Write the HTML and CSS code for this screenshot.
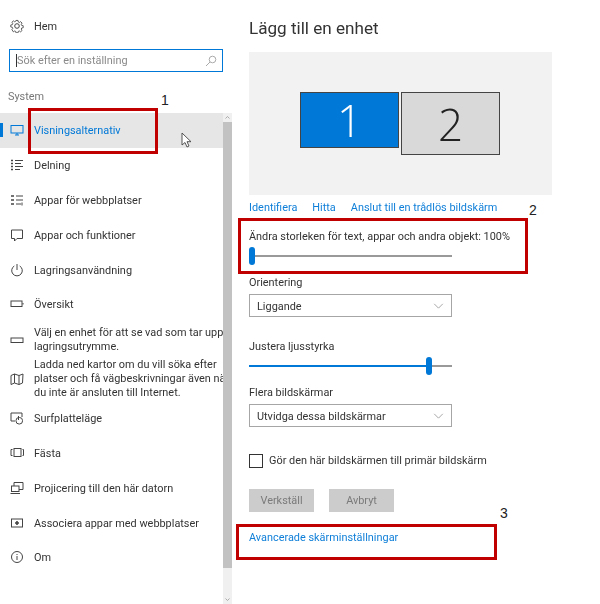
FILE: index.html
```html
<!DOCTYPE html>
<html lang="sv">
<head>
<meta charset="utf-8">
<title>Inställningar</title>
<link rel="stylesheet" href="styles.css">
</head>
<body>
<div class="app">
  <aside class="side">
    <div class="home">
      <svg class="icon" viewBox="0 0 14 14"><path d="M5.800 1h2.400l.3 1.800 1.300.6 1.500-1 1.700 1.700-1 1.500.5 1.300 1.800.3v2.400l-1.800.3-.5 1.300 1 1.500-1.700 1.700-1.500-1-1.300.5-.3 1.700H5.800l-.3-1.700-1.300-.5-1.500 1L1 11.800l1-1.500-.5-1.300L-.3 8.700V6.300l1.800-.3.5-1.300-1-1.500L2.700 1.500l1.500 1 1.300-.6z" transform="translate(1.050 .6) scale(.85)"/><circle cx="7" cy="7" r="2.300"/></svg>
      <span class="text">Hem</span>
    </div>
    <div class="search">
      <span class="caret"></span>
      <span class="placeholder">Sök efter en inställning</span>
      <svg class="search-icon" viewBox="0 0 12 12"><circle cx="7.500" cy="4.500" r="3.300"/><path d="M5 7 1 11"/></svg>
    </div>
    <div class="section">System</div>
    <div class="nav-wrap">
      <nav class="nav">
        <div class="item active">
          <span class="marker"></span>
          <svg class="icon" viewBox="0 0 14 14"><rect x="1" y="2.500" width="12" height="7.500"/><path d="M5 12h4M7 10v2"/></svg>
          <span class="text">Visningsalternativ</span>
        </div>
        <div class="item">
          <svg class="icon" viewBox="0 0 14 14"><path class="heavy" d="M1 2.500h2M1 5.500h2M1 8.500h2M1 11.500h2"/><path d="M5 2.500h8M5 5.500h6M5 8.500h8M5 11.500h5"/></svg>
          <span class="text">Delning</span>
        </div>
        <div class="item">
          <svg class="icon" viewBox="0 0 14 14"><path class="heavy" d="M1 3h3M1 7h3M1 11h3"/><path d="M6 3h7M6 7h7M6 11h5M12 9.500v3"/></svg>
          <span class="text">Appar för webbplatser</span>
        </div>
        <div class="item">
          <svg class="icon" viewBox="0 0 14 14"><path d="M1.500 2h11v8.500H7L4.500 13v-2.500h-3z"/></svg>
          <span class="text">Appar och funktioner</span>
        </div>
        <div class="item">
          <svg class="icon" viewBox="0 0 14 14"><path d="M4.300 3a5.300 5.300 0 1 0 5.400 0M7 1v6"/></svg>
          <span class="text">Lagringsanvändning</span>
        </div>
        <div class="item">
          <svg class="icon" viewBox="0 0 14 14"><rect x="1" y="4" width="11" height="5.500"/><path d="M13 6v1.500"/></svg>
          <span class="text">Översikt</span>
        </div>
        <div class="item tall-two">
          <svg class="icon" viewBox="0 0 14 14"><rect x="1" y="5" width="12" height="4.500"/></svg>
          <span class="lines text"><span>Välj en enhet för att se vad som tar upp</span><span>lagringsutrymme.</span></span>
        </div>
        <div class="item tall-three">
          <svg class="icon" viewBox="0 0 14 14"><path d="M1 3.500 4.500 2 9 3.500 13 2l-.5 9-3.500 1.500L4.500 11 1 12.500zM4.500 2v9M9 3.500v9"/></svg>
          <span class="lines text"><span>Ladda ned kartor om du vill söka efter</span><span>platser och få vägbeskrivningar även när</span><span>du inte är ansluten till Internet.</span></span>
        </div>
        <div class="item">
          <svg class="icon" viewBox="0 0 14 14"><path d="M5 10H1V2h11v4"/><rect x="6" y="6.500" width="6.500" height="6.500" rx="3"/><path d="M8.500 5v4"/></svg>
          <span class="text">Surfplatteläge</span>
        </div>
        <div class="item">
          <svg class="icon" viewBox="0 0 14 14"><rect x="4" y="2.500" width="7" height="8"/><path d="M2.500 3.500H1v6h1.500M12.500 3.500H13.500v6h-1"/></svg>
          <span class="text">Fästa</span>
        </div>
        <div class="item">
          <svg class="icon" viewBox="0 0 14 14"><path d="M4 5V1.500h9v7H9"/><rect x="1.500" y="5" width="7.500" height="5.500"/><path d="M.5 12.500h9.500"/></svg>
          <span class="text">Projicering till den här datorn</span>
        </div>
        <div class="item">
          <svg class="icon" viewBox="0 0 14 14"><rect x="1.500" y="3" width="11" height="8"/><path class="heavy" d="M7 5v4M5 7h4"/></svg>
          <span class="text">Associera appar med webbplatser</span>
        </div>
        <div class="item">
          <svg class="icon" viewBox="0 0 14 14"><circle cx="7" cy="7" r="5.500"/><path d="M7 6v4M7 4v1"/></svg>
          <span class="text">Om</span>
        </div>
      </nav>
      <div class="scrollbar">
        <svg class="arrow" viewBox="0 0 8 9"><path d="M2 5.500 4 3.500 6 5.500"/></svg>
        <div class="thumb"></div>
        <svg class="arrow" viewBox="0 0 8 9"><path d="M2 3.500 4 5.500 6 3.500"/></svg>
      </div>
    </div>
  </aside>

  <main class="main">
    <h1 class="title">Lägg till en enhet</h1>
    <div class="preview">
      <div class="monitor primary">1</div>
      <div class="monitor secondary">2</div>
    </div>
    <div class="links">
      <a>Identifiera</a>
      <a>Hitta</a>
      <a>Anslut till en trådlös bildskärm</a>
    </div>
    <div class="label scale-label">Ändra storleken för text, appar och andra objekt: 100%</div>
    <div class="slider"><span class="fill fill-none"></span><span class="knob"></span><span class="rest"></span></div>
    <div class="label orient-label">Orientering</div>
    <div class="select"><span class="select-text">Liggande</span><svg viewBox="0 0 12 7"><path d="M1 1l5 5 5-5"/></svg></div>
    <div class="label bright-label">Justera ljusstyrka</div>
    <div class="slider"><span class="fill fill-bright"></span><span class="knob"></span><span class="rest"></span></div>
    <div class="label multi-label">Flera bildskärmar</div>
    <div class="select"><span class="select-text">Utvidga dessa bildskärmar</span><svg viewBox="0 0 12 7"><path d="M1 1l5 5 5-5"/></svg></div>
    <label class="check"><span class="box"></span><span>Gör den här bildskärmen till primär bildskärm</span></label>
    <div class="buttons">
      <span class="btn">Verkställ</span>
      <span class="btn">Avbryt</span>
    </div>
    <a class="advanced">Avancerade skärminställningar</a>
  </main>
</div>

<div class="note box-1"></div>
<div class="note box-2"></div>
<div class="note box-3"></div>
<span class="num num-1">1</span>
<span class="num num-2">2</span>
<span class="num num-3">3</span>
<svg class="cursor" viewBox="0 0 11 16"><path d="M1 1v12l3-2.500 2 4.500 2-1-2-4.300h4z"/></svg>
</body>
</html>
```

FILE: styles.css
```css
* { box-sizing: border-box; }
html, body { margin: 0; padding: 0; background: #fff; }
body {
  width: 600px;
  height: 604px;
  overflow: hidden;
  position: relative;
  font-family: Roboto, "Open Sans", sans-serif;
  font-size: 10.900px;
  color: #333;
}
.app { display: flex; height: 604px; filter: blur(.35px); }

/* sidebar */
.side { width: 249px; flex: none; display: flex; flex-direction: column; }
.icon { width: 14px; height: 14px; flex: none; fill: none; stroke: #444; stroke-width: 1; }
.icon .heavy { stroke-width: 1.600; }
.text { padding-top: 1px; }
.home { height: 14px; margin-top: 19px; padding-left: 10px; display: flex; align-items: center; gap: 10px; }
.search {
  width: 214px;
  height: 23px;
  margin: 16px 0 0 9px;
  border: 1.500px solid #0078d7;
  display: flex;
  align-items: center;
  padding: 0 5px 0 6px;
}
.caret { width: 1px; height: 13px; background: #333; flex: none; }
.placeholder { color: #8a8a8a; flex: 1; }
.search-icon { width: 12px; height: 12px; fill: none; stroke: #aaa; stroke-width: 1; }
.section { height: 16px; margin: 16px 0 0 8px; color: #777; line-height: 18px; }
.nav-wrap { display: flex; width: 232px; flex: 1; margin-top: 9px; min-height: 0; }
.nav { width: 223px; overflow: hidden; flex: none; }
.item {
  height: 34.800px;
  display: flex;
  align-items: center;
  gap: 10px;
  padding-left: 10px;
  position: relative;
  white-space: nowrap;
}
.item.active { background: #e6e6e6; color: #0078d7; }
.item.active .icon { stroke: #0078d7; }
.marker { position: absolute; left: 0; top: 10px; width: 3px; height: 14px; background: #0078d7; }
.tall-two { height: 28px; margin: 4px 0; }
.tall-three { height: 42px; margin-bottom: 1px; }
.lines { display: flex; flex-direction: column; line-height: 14px; }
.scrollbar { width: 9px; background: #f0f0f0; display: flex; flex-direction: column; }
.arrow { width: 9px; height: 9px; flex: none; fill: none; stroke: #9a9a9a; stroke-width: .8; }
.thumb { height: 446px; background: #c2c2c2; margin-bottom: auto; }

/* main */
.main { flex: 1; display: flex; flex-direction: column; align-items: flex-start; }
.title { margin: 17px 0 0; font-size: 17.100px; font-weight: 400; line-height: 22px; }
.preview {
  width: 303px;
  height: 143px;
  margin-top: 13px;
  padding: 40px 0 0 51px;
  background: #f2f2f2;
  display: flex;
  align-items: flex-start;
  gap: 2px;
}
.monitor {
  width: 99px;
  border: 1px solid #444;
  display: flex;
  justify-content: center;
  align-items: center;
  font-size: 44px;
  font-weight: 300;
  font-family: "Open Sans", sans-serif;
}
.primary { height: 56px; background: #0078d7; color: #fff; }
.secondary { height: 63px; background: #d9d9d9; color: #222; border-width: 1.500px; }
.links { display: flex; gap: 15px; margin-top: 4px; line-height: 17px; color: #0f7fd8; height: 15px; }
.label { line-height: 17px; height: 15px; }
.scale-label { margin-top: 14px; }
.slider { width: 203px; height: 18px; margin-top: 4px; display: flex; align-items: center; }
.fill { height: 2px; background: #0078d7; flex: none; }
.fill-none { width: 0; }
.fill-bright { width: 177px; }
.knob { width: 6px; height: 18px; border-radius: 3px; background: #0078d7; flex: none; }
.rest { flex: 1; height: 2px; background: #999; }
.orient-label { margin-top: 9px; }
.select {
  width: 203px;
  height: 23px;
  margin-top: 5px;
  border: 1.500px solid #a6a6a6;
  display: flex;
  align-items: center;
  justify-content: space-between;
  padding: 0 7px;
}
.select-text { padding-top: 2px; }
.select svg { width: 11px; height: 6px; fill: none; stroke: #999; stroke-width: 1; }
.bright-label { margin-top: 21px; }
.multi-label { margin-top: 9px; }
.check { display: flex; align-items: center; gap: 6px; margin-top: 26px; height: 15px; }
.box { width: 14px; height: 14px; border: 1.500px solid #333; }
.buttons { display: flex; gap: 15px; margin-top: 21px; }
.btn {
  width: 65px;
  height: 23px;
  background: #ccc;
  color: #7a7a7a;
  display: flex;
  align-items: center;
  justify-content: center;
}
.advanced { margin-top: 18px; color: #0f7fd8; line-height: 15px; }

/* annotations */
.note { position: absolute; border: 3px solid #c00000; }
.box-1 { left: 28px; top: 108px; width: 130px; height: 46px; }
.box-2 { left: 238px; top: 218px; width: 290px; height: 56px; }
.box-3 { left: 236px; top: 524px; width: 261px; height: 36px; }
.num { position: absolute; font-family: "Liberation Sans", sans-serif; font-size: 14px; color: #222; line-height: 16px; }
.num-1 { left: 161px; top: 92px; }
.num-2 { left: 529px; top: 202px; }
.num-3 { left: 500px; top: 505px; }
.cursor { position: absolute; left: 181px; top: 132px; width: 11px; height: 16px; fill: #fff; stroke: #444; stroke-width: .9; }
```
